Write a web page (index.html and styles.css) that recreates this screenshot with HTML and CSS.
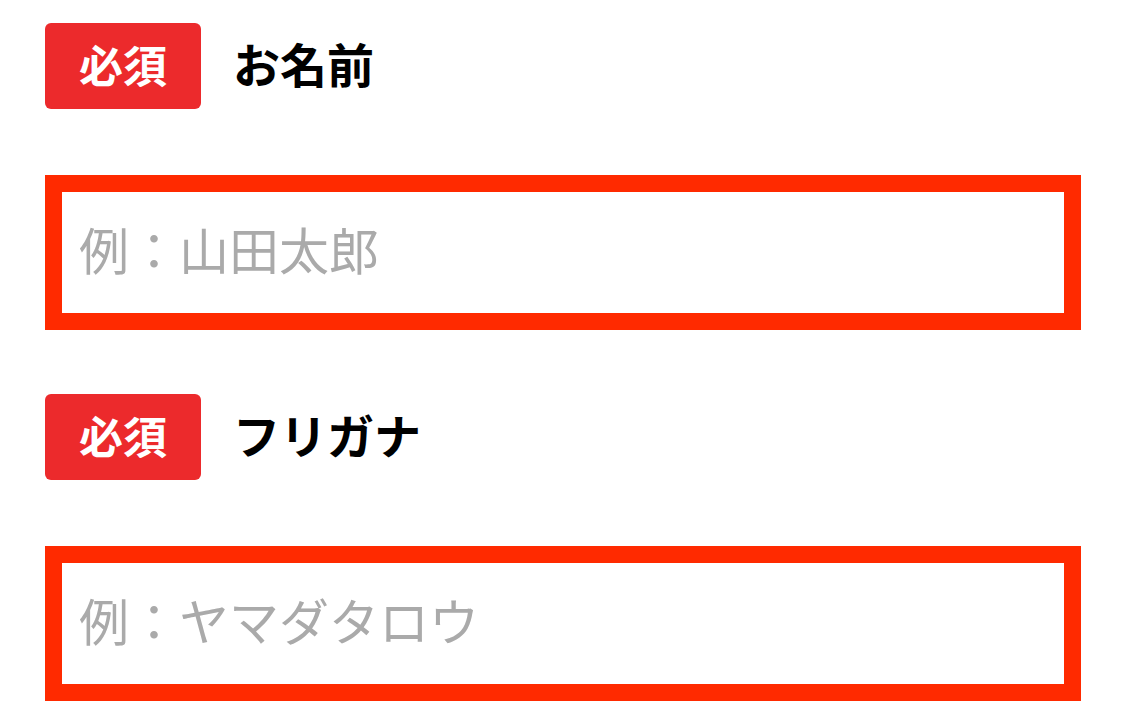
FILE: index.html
```html
<!DOCTYPE html>
<html lang="ja">
<head>
<meta charset="utf-8">
<link rel="stylesheet" href="styles.css">
</head>
<body>
<form class="form">
  <div class="field">
    <div class="field-head">
      <span class="badge">必須</span>
      <label class="label" for="name">お名前</label>
    </div>
    <input class="input" id="name" type="text" placeholder="例：山田太郎">
  </div>
  <div class="field">
    <div class="field-head">
      <span class="badge">必須</span>
      <label class="label" for="kana">フリガナ</label>
    </div>
    <input class="input" id="kana" type="text" placeholder="例：ヤマダタロウ">
  </div>
</form>
</body>
</html>
```
FILE: styles.css
```css
html, body {
  margin: 0;
  padding: 0;
  background: #ffffff;
}
body {
  font-family: "Noto Sans CJK JP", "Noto Sans", sans-serif;
}
.form {
  display: flex;
  flex-direction: column;
  gap: 64px;
  padding: 23px 0 0 45px;
  width: 1036px;
}
.field {
  display: flex;
  flex-direction: column;
  gap: 66px;
}
.field-head {
  display: flex;
  align-items: center;
  gap: 32px;
  height: 86px;
}
.badge {
  display: flex;
  align-items: center;
  justify-content: center;
  width: 156px;
  height: 86px;
  padding-bottom: 4px;
  box-sizing: border-box;
  background: #ec2a2c;
  color: #ffffff;
  border-radius: 6px;
  font-size: 44px;
  font-weight: 700;
  line-height: 1;
}
.label {
  font-size: 47px;
  font-weight: 700;
  color: #000000;
  line-height: 1;
  padding-bottom: 8px;
}
.input {
  box-sizing: border-box;
  width: 1036px;
  height: 155px;
  margin: 0;
  border: 17px solid #ff2a00;
  border-radius: 0;
  padding: 0 17px 10px;
  font-family: "Noto Sans CJK JP", "Noto Sans", sans-serif;
  font-size: 50px;
  color: #333333;
  background: #ffffff;
  outline: none;
}
.input::placeholder {
  color: #aaaaaa;
  opacity: 1;
}
```
